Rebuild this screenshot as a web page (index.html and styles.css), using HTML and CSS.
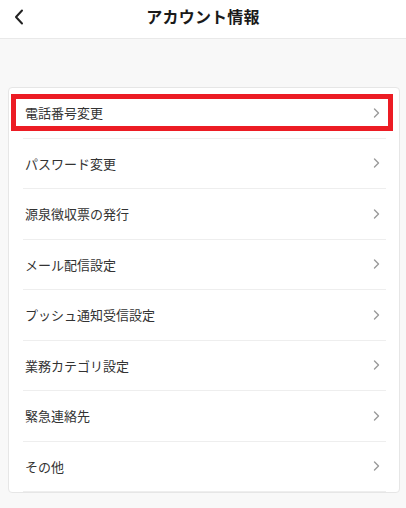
FILE: index.html
```html
<!DOCTYPE html>
<html lang="ja">
<head>
<meta charset="utf-8">
<link rel="stylesheet" href="styles.css">
</head>
<body>
<header class="header">
  <span class="back">
    <svg width="10" height="16" viewBox="0 0 10 16"><path d="M8 1.5 L2 8 L8 14.5" fill="none" stroke="#222" stroke-width="2" stroke-linecap="round" stroke-linejoin="round"/></svg>
  </span>
  <h1 class="title">アカウント情報</h1>
</header>
<main class="content">
  <ul class="card">
    <li class="row"><span class="label">電話番号変更</span><span class="chev"><svg width="7" height="10" viewBox="0 0 7 10"><path d="M1.5 1 L5.5 5 L1.5 9" fill="none" stroke="#9a9a9a" stroke-width="1.4" stroke-linecap="round" stroke-linejoin="round"/></svg></span></li>
    <li class="row"><span class="label">パスワード変更</span><span class="chev"><svg width="7" height="10" viewBox="0 0 7 10"><path d="M1.5 1 L5.5 5 L1.5 9" fill="none" stroke="#9a9a9a" stroke-width="1.4" stroke-linecap="round" stroke-linejoin="round"/></svg></span></li>
    <li class="row"><span class="label">源泉徴収票の発行</span><span class="chev"><svg width="7" height="10" viewBox="0 0 7 10"><path d="M1.5 1 L5.5 5 L1.5 9" fill="none" stroke="#9a9a9a" stroke-width="1.4" stroke-linecap="round" stroke-linejoin="round"/></svg></span></li>
    <li class="row"><span class="label">メール配信設定</span><span class="chev"><svg width="7" height="10" viewBox="0 0 7 10"><path d="M1.5 1 L5.5 5 L1.5 9" fill="none" stroke="#9a9a9a" stroke-width="1.4" stroke-linecap="round" stroke-linejoin="round"/></svg></span></li>
    <li class="row"><span class="label">プッシュ通知受信設定</span><span class="chev"><svg width="7" height="10" viewBox="0 0 7 10"><path d="M1.5 1 L5.5 5 L1.5 9" fill="none" stroke="#9a9a9a" stroke-width="1.4" stroke-linecap="round" stroke-linejoin="round"/></svg></span></li>
    <li class="row"><span class="label">業務カテゴリ設定</span><span class="chev"><svg width="7" height="10" viewBox="0 0 7 10"><path d="M1.5 1 L5.5 5 L1.5 9" fill="none" stroke="#9a9a9a" stroke-width="1.4" stroke-linecap="round" stroke-linejoin="round"/></svg></span></li>
    <li class="row"><span class="label">緊急連絡先</span><span class="chev"><svg width="7" height="10" viewBox="0 0 7 10"><path d="M1.5 1 L5.5 5 L1.5 9" fill="none" stroke="#9a9a9a" stroke-width="1.4" stroke-linecap="round" stroke-linejoin="round"/></svg></span></li>
    <li class="row"><span class="label">その他</span><span class="chev"><svg width="7" height="10" viewBox="0 0 7 10"><path d="M1.5 1 L5.5 5 L1.5 9" fill="none" stroke="#9a9a9a" stroke-width="1.4" stroke-linecap="round" stroke-linejoin="round"/></svg></span></li>
    <li class="highlight"></li>
  </ul>
</main>
</body>
</html>
```
FILE: styles.css
```css
* { box-sizing: border-box; }
html, body {
  margin: 0;
  padding: 0;
  background: #f8f8f8;
  font-family: "Noto Sans CJK JP", "Noto Sans", sans-serif;
  color: #333;
}
.header {
  position: relative;
  height: 39px;
  background: #fff;
  border-bottom: 1px solid #e9e9e9;
  display: flex;
  align-items: center;
  justify-content: center;
}
.back {
  position: absolute;
  left: 14px;
  top: 9px;
  width: 10px;
  height: 16px;
  display: flex;
}
.title {
  margin: 0;
  font-size: 16px;
  font-weight: 700;
  color: #1a1a1a;
  line-height: 1;
  padding-bottom: 6px;
  letter-spacing: 0.2px;
}
.content {
  padding: 48px 6px 0 8px;
}
.card {
  position: relative;
  list-style: none;
  margin: 0;
  padding: 0 13px 0 14px;
  background: #fff;
  border: 1px solid #e6e6e6;
  border-radius: 4px;
}
.row {
  height: 50.5px;
  display: flex;
  align-items: center;
  justify-content: space-between;
  border-bottom: 1px solid #eeeeee;
  padding: 0 6px 0 2px;
  font-size: 13px;
}
.row:last-of-type {
  border-bottom: none;
  height: 49px;
}
.label {
  line-height: 1;
}
.chev {
  display: flex;
}
.highlight {
  position: absolute;
  left: 2px;
  top: 6px;
  width: 382px;
  height: 37px;
  border: 5px solid #ec1c24;
}
```
